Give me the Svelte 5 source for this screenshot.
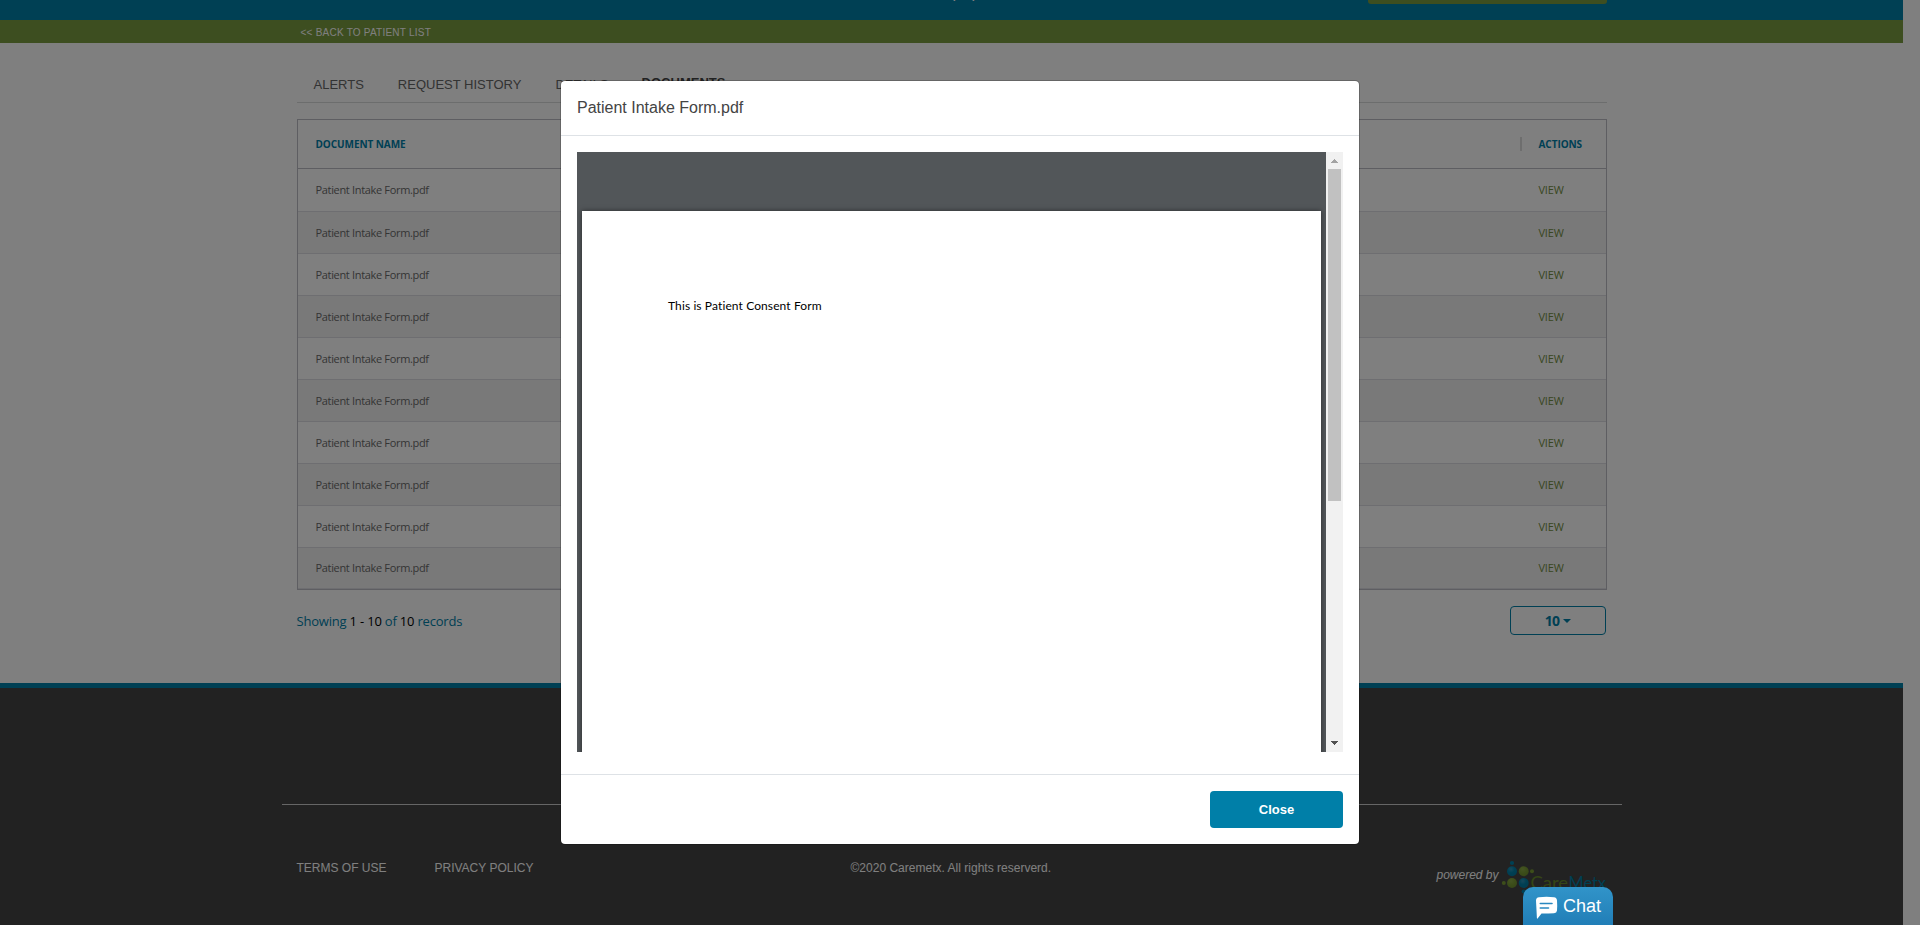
<script>
  const rows = Array.from({ length: 10 }, () => 'Patient Intake Form.pdf');
  const tabs = ['ALERTS', 'REQUEST HISTORY', 'DETAILS', 'DOCUMENTS'];
</script>

<div class="screen">
  <div class="page">
    <header class="banner">
      <div class="container banner-inner">
        <span class="banner-title">pp</span>
        <div class="banner-button"></div>
      </div>
    </header>
    <div class="back"><div class="container"><a class="back-link" href="#list">&lt;&lt; BACK TO PATIENT LIST</a></div></div>

    <main class="container">
      <nav class="tabs">
        {#each tabs as tab}
          <span class="tab" class:active={tab === 'DOCUMENTS'}>{tab}</span>
        {/each}
      </nav>

      <div class="table">
        <div class="thead">
          <span class="label">DOCUMENT NAME</span>
          <span class="bar"></span>
          <span class="label actions">ACTIONS</span>
        </div>
        {#each rows as row}
          <div class="row"><span class="name">{row}</span><a class="view" href="#view">VIEW</a></div>
        {/each}
      </div>

      <div class="pager">
        <span class="showing">Showing <b>1 - 10</b> of <b>10</b> records</span>
        <button class="size"><span>10</span><i class="caret"></i></button>
      </div>
    </main>

    <footer>
      <div class="rule"></div>
      <div class="container foot">
        <span class="terms">TERMS OF USE</span>
        <span class="privacy">PRIVACY POLICY</span>
        <span class="copy">©2020 Caremetx. All rights reserverd.</span>
        <span class="powered">powered by</span>
        <svg class="logo" width="110" height="36" viewBox="0 0 110 36">
          <defs>
            <radialGradient id="lb" cx=".4" cy=".3" r=".7"><stop offset="0" stop-color="#3092b8" /><stop offset=".5" stop-color="#0080a8" /><stop offset="1" stop-color="#007aa2" /></radialGradient>
            <radialGradient id="lg" cx=".4" cy=".3" r=".7"><stop offset="0" stop-color="#8aa846" /><stop offset=".5" stop-color="#7a9c35" /><stop offset="1" stop-color="#6f9030" /></radialGradient>
          </defs>
          <circle cx="12" cy="3" r="2.1" fill="#0080a8" />
          <circle cx="12" cy="11.2" r="5" fill="url(#lb)" />
          <circle cx="23.7" cy="11.2" r="5" fill="url(#lg)" />
          <circle cx="32" cy="11.2" r="2" fill="#7a9c35" />
          <circle cx="3.8" cy="23" r="2" fill="#7a9c35" />
          <circle cx="12" cy="23" r="5" fill="url(#lg)" />
          <circle cx="23.7" cy="23" r="5" fill="url(#lb)" />
          <circle cx="23.7" cy="31.5" r="2.1" fill="#0080a8" />
          <text x="30.5" y="28.5" font-size="17.5" textLength="37.5" lengthAdjust="spacingAndGlyphs" fill="#688a2c">Care</text>
          <text x="68.5" y="28.5" font-size="17.5" textLength="37.5" lengthAdjust="spacingAndGlyphs" fill="#007ea6">Metx</text>
        </svg>
      </div>
    </footer>
  </div>

  <div class="backdrop">
    <section class="modal">
      <h5>Patient Intake Form.pdf</h5>
      <div class="body">
        <div class="viewer">
          <div class="sheet">This is Patient Consent Form</div>
        </div>
        <div class="scroll">
          <svg width="17" height="17" viewBox="0 0 17 17" shape-rendering="crispEdges"><path d="M5 11h7v-1h-1v-1h-1v-1h-1v-1h-1v1h-1v1h-1v1h-1z" fill="#a3a3a3" /></svg>
          <div class="thumb"></div>
          <svg width="17" height="17" viewBox="0 0 17 17" shape-rendering="crispEdges"><path d="M5 6h7v1h-1v1h-1v1h-1v1h-1v-1h-1v-1h-1v-1h-1z" fill="#505050" /></svg>
        </div>
      </div>
      <div class="modal-foot"><button class="close">Close</button></div>
    </section>
  </div>

  <div class="chat">
    <svg width="23" height="24" viewBox="0 0 23 24">
      <path d="M4 1.2Q11.500.2 19 1.2Q21.8 1.600 22 4.500Q22.400 9.500 22 14.500Q21.800 17 19 17.200Q12 17.700 6.500 17.600L2.600 22.500Q2 23 1.900 22L1 4.500Q1 1.600 4 1.200Z" fill="#fff" />
      <path d="M5.300 7.500H17M5.300 12H13.500" stroke="#2a88c0" stroke-width="1.600" stroke-linecap="round" />
    </svg>
    <span>Chat</span>
  </div>
</div>

<style>
  :global(body) { margin: 0; overflow: hidden; background: #fff; }
  .screen { position: relative; width: 1920px; height: 925px; overflow: hidden; font-family: "Liberation Sans", Arial, sans-serif; background: #fff; }
  .screen * { box-sizing: border-box; }
  a { text-decoration: none; }
  button { font: inherit; padding: 0; }
  .page { width: 1903px; height: 925px; display: flex; flex-direction: column; }
  .container { width: 1310px; margin: 0 auto; }
  .banner { height: 20px; background: #0080a8; }
  .banner-inner { display: flex; justify-content: space-between; height: 4px; overflow: hidden; }
  .banner-title { margin: -17px 0 0 656px; width: 30px; height: 20px; font-size: 16px; line-height: 20px; letter-spacing: 10px; color: #fff; }
  .banner-button { width: 239px; height: 4px; background: #7a9c40; border-radius: 0 0 3px 3px; }
  .back { height: 23px; background: #7a9c40; display: flex; }
  .back-link { display: block; padding: 6px 0 0 4px; font-size: 10px; line-height: 14px; letter-spacing: .23px; color: #fff; }
  main { flex: none; height: 640px; }
  .tabs { display: flex; height: 60px; border-bottom: 1px solid #d9dadb; padding: 33px 0 0 17px; font-size: 13px; line-height: 18px; color: #666; }
  .tab { margin-right: 34px; white-space: nowrap; }
  .active { font-weight: bold; margin-top: -2px; margin-left: -1px; color: #444; }
  .table { margin-top: 16px; height: 471px; border: 1px solid #bcbdc4; display: flex; flex-direction: column; font-family: "Open Sans", "Noto Sans", sans-serif; }
  .thead { height: 49px; border-bottom: 1px solid #bcbdc4; display: flex; align-items: center; padding-left: 18px; flex: none; }
  .label { font-size: 10px; font-weight: 700; letter-spacing: -.06px; color: #0080a8; width: 1204px; }
  .bar { width: 2px; height: 14px; background: #dcdcdc; }
  .actions { margin-left: 17px; width: 60px; }
  .row { height: 42px; flex: none; display: flex; align-items: center; border-bottom: 1px solid #dcdce2; padding: 0 0 1px 18px; font-size: 11px; color: #6a6a6a; }
  .row:nth-child(2) { height: 43px; padding-bottom: 2px; }
  .row:last-child { height: 41px; padding-bottom: 2px; }
  .row:nth-child(odd) { background: #f3f3f3; }
  .name { width: 1223px; letter-spacing: -.33px; }
  .view { color: #728e42; letter-spacing: -.2px; }
  .pager { display: flex; justify-content: space-between; padding-top: 16px; font-family: "Open Sans", "Noto Sans", sans-serif; font-size: 13px; }
  .showing { color: #0080a8; line-height: 30px; letter-spacing: -.2px; }
  .showing b { color: #000; font-weight: 400; }
  .size { width: 96px; height: 29px; margin-right: 1px; border: 1px solid #0080a8; border-radius: 4px; background: none; color: #0080a8; font-weight: 700; font-size: 14px; letter-spacing: -.8px; display: flex; align-items: center; justify-content: center; padding-left: 1px; }
  .caret { margin-left: 4px; border: 4px solid transparent; border-top-color: #0080a8; border-bottom: 0; }
  footer { flex: 1; border-top: 5px solid #0080a8; background: #444; }
  .rule { width: 1340px; margin: 116px auto 0; height: 1px; background: #ccc; }
  .foot { display: flex; font-size: 12px; line-height: 16px; color: #fff; white-space: nowrap; }
  .foot span { margin-top: 55px; flex: none; }
  .terms { width: 138px; }
  .privacy { width: 416px; }
  .copy { width: 586px; letter-spacing: .01px; }
  .foot .powered { margin-top: 62px; width: 63px; font-style: italic; }
  .logo { margin-top: 55px; font-family: Lato, sans-serif; flex: none; }
  .backdrop { position: absolute; inset: 0; background: rgba(0, 0, 0, .5); display: flex; justify-content: center; align-items: flex-start; padding-top: 80px; }
  .modal { width: 800px; height: 765px; border: 1px solid rgba(0, 0, 0, .2); border-radius: 5px; background: #fff; background-clip: padding-box; }
  h5 { margin: 0; height: 55px; border-bottom: 1px solid #dee2e6; padding: 17px 16px; font-size: 16px; line-height: 20px; font-weight: 400; color: #444; }
  .body { display: flex; height: 639px; padding: 16px 16px 22px; border-bottom: 1px solid #dee2e6; }
  .viewer { width: 749px; height: 600px; background: #525659; padding: 59px 5px 0; overflow: hidden; }
  .sheet { height: 620px; background: #fff; box-shadow: 0 0 5px rgba(0, 0, 0, .5); padding: 86px 0 0 86px; font-family: Lato, sans-serif; font-size: 12px; line-height: 18px; letter-spacing: .11px; font-variant-ligatures: none; color: #000; }
  .scroll { width: 17px; height: 600px; background: #f1f1f1; display: flex; flex-direction: column; align-items: center; }
  .thumb { width: 13px; height: 332px; background: #c1c1c1; margin-bottom: 234px; }
  .scroll svg { flex: none; }
  .modal-foot { display: flex; justify-content: flex-end; padding: 16px; }
  .close { width: 133px; height: 37px; border: 0; border-radius: 4px; background: #007fa8; color: #fff; font-size: 13px; font-weight: 700; }
  .chat { position: absolute; left: 1523px; top: 887px; width: 90px; height: 38px; border-radius: 10px 10px 0 0; background: linear-gradient(#3194c9, #217eb7); display: flex; padding: 9px 0 0 12px; color: #fff; font-size: 18px; line-height: 20px; }
  .chat span { margin-left: 5px; }
</style>
